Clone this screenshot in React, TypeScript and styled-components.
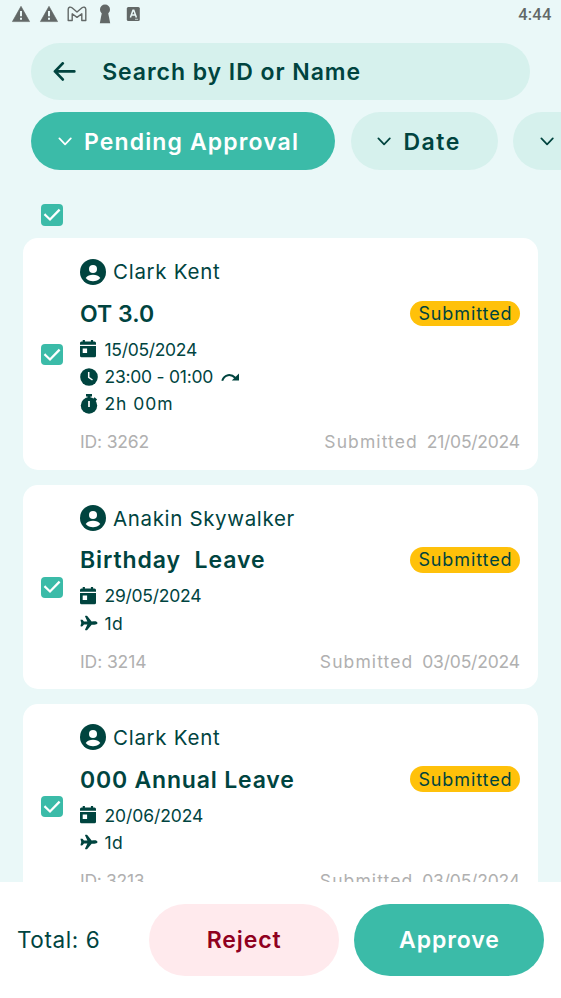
import React from "react";
import styled, { createGlobalStyle } from "styled-components";
import { IoAirplane } from "react-icons/io5";

const Global = createGlobalStyle`
  *, *::before, *::after { box-sizing: border-box; }
  body { margin: 0; font-family: Inter, "Open Sans", sans-serif; color: #00443f; }
  svg { display: block; flex: none; }
`;

const Screen = styled.div`
  width: 561px;
  height: 998px;
  display: flex;
  flex-direction: column;
  overflow: hidden;
  background: #eaf8f8;
`;

const StatusBar = styled.header`
  flex: none;
  height: 42.5px;
  padding: 4px 9.5px 0 11px;
  display: flex;
  align-items: flex-start;
  justify-content: space-between;
  color: #626867;
`;

const Notifications = styled.div`
  display: flex;
  align-items: center;
  gap: 8px;
`;

const Time = styled.time`
  font: 500 16.5px/20px Roboto, sans-serif;
  letter-spacing: 0.2px;
  padding-top: 1px;
`;

const Label = styled.span<{ $track?: number }>`
  white-space: pre;
  letter-spacing: ${(p) => p.$track ?? 0}px;
  margin-right: ${(p) => -(p.$track ?? 0)}px;
`;

const SearchBar = styled.div`
  flex: none;
  height: 57.5px;
  margin: 0 31px;
  padding: 1px 0 0 21.5px;
  display: flex;
  align-items: center;
  gap: 25.7px;
  border-radius: 29px;
  background: #d6f1ed;
  font-size: 23px;
  font-weight: 600;
`;

const Filters = styled.nav`
  flex: none;
  display: flex;
  gap: 15.5px;
  margin-top: 12px;
  padding-left: 31px;
  overflow: hidden;
`;

const Chip = styled.button<{ $active?: boolean; $width: number }>`
  flex: none;
  width: ${(p) => p.$width}px;
  height: 58px;
  padding: 1px 0 0 25.5px;
  display: flex;
  align-items: center;
  gap: 12.5px;
  border: 0;
  border-radius: 29px;
  font: 600 23px Inter, sans-serif;
  color: ${(p) => (p.$active ? "#fff" : "#00443f")};
  background: ${(p) => (p.$active ? "#3bbba8" : "#d6f1ed")};
`;

const SelectAll = styled.div`
  flex: none;
  height: 68px;
  padding: 34px 0 0 41px;
`;

const Box = styled.span`
  flex: none;
  width: 21.5px;
  height: 21.5px;
  display: flex;
  align-items: center;
  justify-content: center;
  border-radius: 4px;
  background: #3bbba8;
`;

const List = styled.main`
  flex: 1;
  min-height: 0;
  overflow: hidden;
  display: flex;
  flex-direction: column;
  gap: 14.4px;
  padding: 0 23px;
`;

const Card = styled.article`
  flex: none;
  display: flex;
  align-items: center;
  gap: 17.5px;
  padding: 20.6px 18px 16.3px;
  border-radius: 15px;
  background: #fff;
`;

const CardCheck = styled.div`
  align-self: stretch;
  display: flex;
  align-items: center;
  margin-top: -3.5px;
`;

const Content = styled.div`
  flex: 1;
`;

const Person = styled.div`
  height: 26px;
  display: flex;
  align-items: center;
  gap: 7px;
  font-size: 20.5px;
`;

const TitleRow = styled.div`
  height: 32px;
  margin-top: 12.7px;
  display: flex;
  align-items: center;
  justify-content: space-between;
`;

const Title = styled.h2`
  margin: 0;
  padding-top: 1px;
  font-size: 23px;
  font-weight: 600;
`;

const Badge = styled.span`
  height: 25.5px;
  width: 110px;
  display: flex;
  align-items: center;
  justify-content: center;
  border-radius: 13px;
  background: #ffc10a;
  font-size: 18px;
`;

const Details = styled.div`
  margin-top: 6.2px;
`;

const Detail = styled.div`
  height: 27.4px;
  display: flex;
  align-items: center;
  font-size: 17.5px;
`;

const DetailIcon = styled.span`
  width: 24.5px;
  flex: none;
`;

const DetailSuffix = styled.span`
  margin-left: 8px;
`;

const Meta = styled.footer`
  height: 24px;
  margin-top: 12.3px;
  display: flex;
  align-items: center;
  gap: 10px;
  font-size: 17.5px;
  color: #b0b0b0;
  & > :first-child { margin-right: auto; }
`;

const ActionBar = styled.footer`
  flex: none;
  height: 116.3px;
  padding: 22px 17px 0;
  display: flex;
  align-items: flex-start;
  background: #fff;
`;

const Total = styled.div`
  width: 131.7px;
  line-height: 72px;
  font-size: 22.5px;
`;

const Action = styled.button<{ $primary?: boolean }>`
  width: 190px;
  height: 72px;
  border: 0;
  padding: 0;
  border-radius: 36px;
  font: 600 23px Inter, sans-serif;
  color: ${(p) => (p.$primary ? "#fff" : "#900020")};
  background: ${(p) => (p.$primary ? "#3bbba8" : "#ffeaed")};
  & + & { margin-left: 15.3px; }
`;

const Warning = () => (
  <svg width="20" height="20" viewBox="0 0 20 20">
    <path d="M10 2.3 18.6 17.6H1.4Z" fill="currentColor" stroke="currentColor" strokeWidth=".6" strokeLinejoin="round" />
    <path d="M10 7v5.200M10 13.800v2" stroke="#eaf8f8" strokeWidth="2" />
  </svg>
);

const Mail = () => (
  <svg width="20" height="20" viewBox="0 0 20 20" fill="none" stroke="currentColor" strokeWidth="1.4" strokeLinejoin="round">
    <path d="M1.2 16.5V5.2C1.2 3 3.5 2.6 5 3.8L10 8l5-4.2c1.5-1.2 3.8-.8 3.8 1.4v11.3h-4V9.8L10 13.4 5.2 9.8v6.7Z" />
  </svg>
);

const Keyhole = () => (
  <svg width="20" height="20" viewBox="0 0 20 20" fill="currentColor">
    <circle cx="10" cy="5.5" r="5" />
    <path d="M7 8h6l2.2 11.3H4.8Z" />
  </svg>
);

const LetterTile = () => (
  <svg width="20" height="20" viewBox="0 0 20 20">
    <rect x="3.8" y="3.1" width="13" height="14" rx="1.5" fill="currentColor" />
    <path d="M7.4 13.5 10 6.2h.8l2.600 7.300M8.400 11h4" fill="none" stroke="#eaf8f8" strokeWidth="1.5" />
    <path d="M12 15.3h3" stroke="#eaf8f8" strokeWidth=".7" />
  </svg>
);

const BackArrow = () => (
  <svg width="24" height="20" viewBox="0 0 24 20" fill="none" stroke="currentColor" strokeWidth="2.8" strokeLinecap="round" strokeLinejoin="round">
    <path d="M21.3 9.4H2M9.700 1.400 2 9.400l7.700 8" />
  </svg>
);

const Chevron = () => (
  <svg width="15" height="10" viewBox="0 0 15 10" fill="none" stroke="currentColor" strokeWidth="1.7" strokeLinecap="round" strokeLinejoin="round">
    <path d="m2.400 1.400 5.700 6 5.700-6" />
  </svg>
);

const Checkbox = () => (
  <Box>
    <svg width="18" height="14" viewBox="0 0 18 14" fill="none" stroke="#fff" strokeWidth="2.3" strokeLinecap="square">
      <path d="m2.300 7 4.700 4.500L15.800 2.500" />
    </svg>
  </Box>
);

const Avatar = () => (
  <svg width="26" height="26" viewBox="0 0 26 26">
    <circle cx="13" cy="13" r="13" fill="#00443f" />
    <circle cx="13" cy="10" r="4" fill="#fff" />
    <path d="M5.7 19c1.5-2.5 4.3-3.2 7.3-3.2s5.8.7 7.3 3.2C16.6 23.3 9.4 23.3 5.7 19Z" fill="#fff" />
  </svg>
);

const Calendar = () => (
  <svg width="18" height="18" viewBox="0 0 18 18">
    <path d="M2.7 0h2.2v1.5h6V0h2.200v1.500H14.500a1.500 1.500 0 0 1 1.500 1.500v1.700H0V3a1.500 1.500 0 0 1 1.500-1.500h1.200Z" fill="#00443f" />
    <path d="M0 6h16v9.800a1.500 1.500 0 0 1-1.500 1.500h-13A1.500 1.500 0 0 1 0 15.800Zm2.700 2.500v4.400h4.400V8.500Z" fill="#00443f" />
  </svg>
);

const Clock = () => (
  <svg width="18" height="18" viewBox="0 0 18 18">
    <circle cx="9" cy="9" r="8.8" fill="#00443f" />
    <path d="M8.700 4v5.400l3.800 2.600" fill="none" stroke="#fff" strokeWidth="1.5" />
  </svg>
);

const Stopwatch = () => (
  <svg width="18" height="20" viewBox="0 0 18 20">
    <path d="M6 0h6v2.400h-1.500v2h-3v-2H6ZM14.600 3.300l2.500 2.200-1.700 1.900-2.600-2.200Z" fill="#00443f" />
    <circle cx="9" cy="11.5" r="8.2" fill="#00443f" />
    <path d="M9 7v6" stroke="#fff" strokeWidth="1.7" />
  </svg>
);

const NextDay = () => (
  <svg width="19" height="10" viewBox="0 0 19 10">
    <path d="M1.200 8.700C3.500 2 10 1.500 14.500 6" fill="none" stroke="#00443f" strokeWidth="2" />
    <path d="M18 1.400V8.600H10.800Z" fill="#00443f" />
  </svg>
);

const icons = {
  date: <Calendar />,
  clock: <Clock />,
  timer: <Stopwatch />,
  plane: <IoAirplane size={18} />,
};

// A string together with its letter spacing in pixels.
type Text = [string, number];
type Request = {
  name: Text;
  title: Text;
  details: { icon: keyof typeof icons; text: Text; nextDay?: boolean }[];
  id: Text;
  submitted: Text;
};

const requests: Request[] = [
  {
    name: ["Clark Kent", 0.72],
    title: ["OT 3.0", 0.05],
    details: [
      { icon: "date", text: ["15/05/2024", -0.3] },
      { icon: "clock", text: ["23:00 - 01:00", -0.25], nextDay: true },
      { icon: "timer", text: ["2h 00m", 0.95] },
    ],
    id: ["ID: 3262", -0.15],
    submitted: ["21/05/2024", -0.25],
  },
  {
    name: ["Anakin Skywalker", 0.65],
    title: ["Birthday  Leave", 0.92],
    details: [
      { icon: "date", text: ["29/05/2024", -0.25] },
      { icon: "plane", text: ["1d", 0.38] },
    ],
    id: ["ID: 3214", -0.1],
    submitted: ["03/05/2024", -0.2],
  },
  {
    name: ["Clark Kent", 0.72],
    title: ["000 Annual Leave", 0.81],
    details: [
      { icon: "date", text: ["20/06/2024", -0.08] },
      { icon: "plane", text: ["1d", 0.38] },
    ],
    id: ["ID: 3213", -0.3],
    submitted: ["03/05/2024", -0.2],
  },
];

const Tracked = ({ text }: { text: Text }) => <Label $track={text[1]}>{text[0]}</Label>;

const RequestCard = ({ request }: { request: Request }) => (
  <Card>
    <CardCheck><Checkbox /></CardCheck>
    <Content>
      <Person><Avatar /><Tracked text={request.name} /></Person>
      <TitleRow>
        <Title><Tracked text={request.title} /></Title>
        <Badge><Label $track={0.9}>Submitted</Label></Badge>
      </TitleRow>
      <Details>
        {request.details.map((d) => (
          <Detail key={d.icon}>
            <DetailIcon>{icons[d.icon]}</DetailIcon>
            <Tracked text={d.text} />
            {d.nextDay && <DetailSuffix><NextDay /></DetailSuffix>}
          </Detail>
        ))}
      </Details>
      <Meta>
        <Tracked text={request.id} />
        <Label $track={1.1}>Submitted</Label>
        <Tracked text={request.submitted} />
      </Meta>
    </Content>
  </Card>
);

export default function App() {
  return (
    <Screen>
      <Global />
      <StatusBar>
        <Notifications><Warning /><Warning /><Mail /><Keyhole /><LetterTile /></Notifications>
        <Time>4:44</Time>
      </StatusBar>
      <SearchBar><BackArrow /><Label $track={0.95}>Search by ID or Name</Label></SearchBar>
      <Filters>
        <Chip $active $width={304}><Chevron /><Label $track={1.12}>Pending Approval</Label></Chip>
        <Chip $width={147.3}><Chevron /><Label $track={1.5}>Date</Label></Chip>
        <Chip $width={147.3} aria-label="More filters"><Chevron /></Chip>
      </Filters>
      <SelectAll><Checkbox /></SelectAll>
      <List>
        {requests.map((r) => <RequestCard key={r.id[0]} request={r} />)}
      </List>
      <ActionBar>
        <Total><Label $track={0.6}>Total: 6</Label></Total>
        <Action><Label $track={0.9}>Reject</Label></Action>
        <Action $primary><Label $track={0.9}>Approve</Label></Action>
      </ActionBar>
    </Screen>
  );
}
